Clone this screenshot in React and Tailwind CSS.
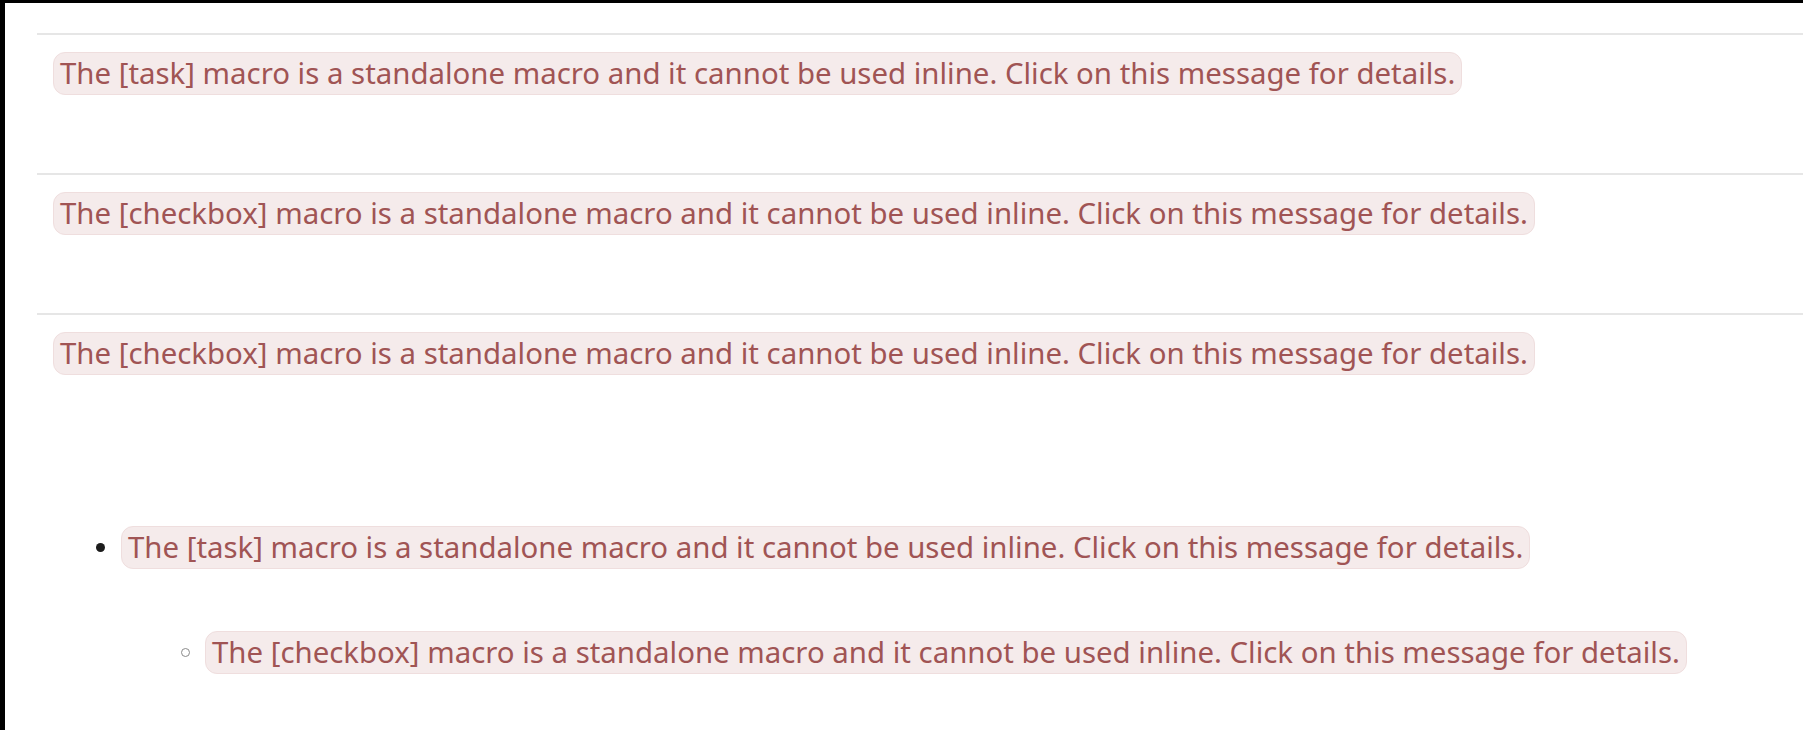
const TASK = "The [task] macro is a standalone macro and it cannot be used inline. Click on this message for details.";
const CHECKBOX = "The [checkbox] macro is a standalone macro and it cannot be used inline. Click on this message for details.";

function MacroError({ text }) {
  return (
    <span className="inline-block rounded-[12px] border border-[#efdede] bg-[#f5ebeb] px-[6px] py-[2px] text-[#a05454] leading-[37px] cursor-pointer">
      {text}
    </span>
  );
}

function Block({ text, last }) {
  return (
    <div className={last ? "border-t-2 border-[#e6e6e6] pt-[17px]" : "border-t-2 border-[#e6e6e6] pt-[17px] pb-[78px]"}>
      <div className="flex pl-[16px]">
        <MacroError text={text} />
      </div>
    </div>
  );
}

export default function App() {
  return (
    <div className="min-h-screen bg-black pt-[3px] pl-[5px]">
      <div className="min-h-[727px] bg-white pl-[32px] pt-[30px] text-[29.4px] font-['Noto_Sans',sans-serif]">
        <Block text={TASK} />
        <Block text={CHECKBOX} />
        <Block text={CHECKBOX} last />
        <ul className="mt-[151px] list-none">
          <li className="flex items-center">
            <span className="ml-[59px] mr-[16px] h-[9px] w-[9px] rounded-full bg-[#1c1c1c]" />
            <MacroError text={TASK} />
          </li>
          <li className="mt-[62px] flex items-center">
            <span className="ml-[144px] mr-[15px] h-[9px] w-[9px] rounded-full border border-[#8a8a8a]" />
            <MacroError text={CHECKBOX} />
          </li>
        </ul>
      </div>
    </div>
  );
}
